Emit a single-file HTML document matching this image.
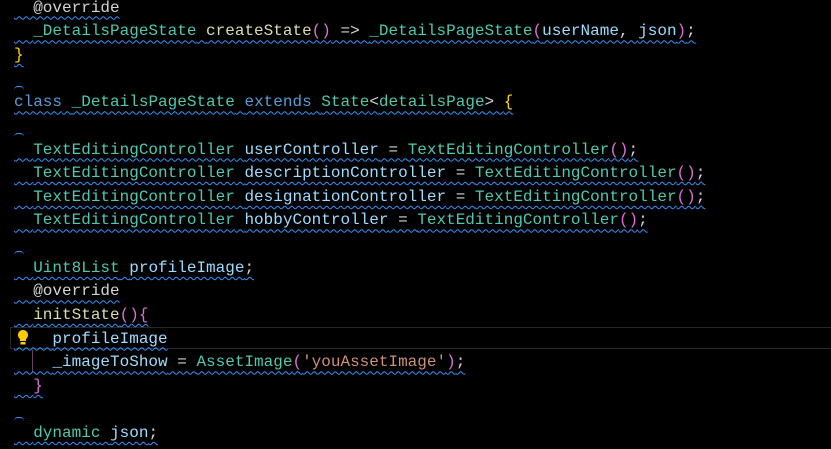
<!DOCTYPE html>
<html><head><meta charset="utf-8"><style>
html,body{margin:0;padding:0;background:#000;width:831px;height:449px;overflow:hidden}
#c{position:absolute;left:14px;top:-3.3px;font-family:"Liberation Mono",monospace;font-size:16px;line-height:23.65px;color:#d4d4d4}
.l{height:23.65px;white-space:pre}
.s{text-decoration:underline wavy #3794ff;text-decoration-thickness:1px;text-underline-offset:4px;text-decoration-skip-ink:none}
.k{color:#569cd6}.t{color:#4ec9b0}.f{color:#dcdcaa}.v{color:#9cdcfe}.st{color:#ce9178}
.g{color:#ffd700}.p{color:#da70d6}
.tl{display:inline-block;width:10px;height:3px;border-top:1px solid #3794ff;border-radius:6px 6px 0 0;vertical-align:top;margin-top:18px}
#hl{position:absolute;left:10px;top:327px;width:821px;height:22px;border:1px solid #282828;border-right:none;box-sizing:border-box}
#bulb{position:absolute;left:17px;top:329px}
#bar{position:absolute;left:32px;top:350px;width:1px;height:22px;background:#6a3f5a}
</style></head><body>
<div id="hl"></div>
<div id="bar"></div>
<svg id="bulb" width="12" height="17" viewBox="0 0 12 17"><path d="M6 1C3 1 1 3.2 1 6c0 2 1.2 3 2 4.2V12h6v-1.8C9.8 9 11 8 11 6c0-2.8-2-5-5-5z" fill="#ffcc00"/><rect x="3.5" y="13" width="5" height="2.5" fill="#ffcc00"/></svg>
<div id="c"><div class="l"><span class="s">  @override</span></div><div class="l"><span class="s">  <span class="t">_DetailsPageState</span> <span class="f">createState</span><span class="p">()</span> =&gt; <span class="t">_DetailsPageState</span><span class="p">(</span><span class="v">userName</span>, <span class="v">json</span><span class="p">)</span>;</span></div><div class="l"><span class="s g">}</span></div><div class="l"><span class="tl"></span></div><div class="l"><span class="s"><span class="k">class</span> <span class="t">_DetailsPageState</span> <span class="k">extends</span> <span class="t">State</span>&lt;<span class="t">detailsPage</span>&gt; <span class="g">{</span></span></div><div class="l"><span class="tl"></span></div><div class="l"><span class="s">  <span class="t">TextEditingController</span> <span class="v">userController</span> = <span class="t">TextEditingController</span><span class="p">()</span>;</span></div><div class="l"><span class="s">  <span class="t">TextEditingController</span> <span class="v">descriptionController</span> = <span class="t">TextEditingController</span><span class="p">()</span>;</span></div><div class="l"><span class="s">  <span class="t">TextEditingController</span> <span class="v">designationController</span> = <span class="t">TextEditingController</span><span class="p">()</span>;</span></div><div class="l"><span class="s">  <span class="t">TextEditingController</span> <span class="v">hobbyController</span> = <span class="t">TextEditingController</span><span class="p">()</span>;</span></div><div class="l"><span class="tl"></span></div><div class="l"><span class="s">  <span class="t">Uint8List</span> <span class="v">profileImage</span>;</span></div><div class="l"><span class="s">  @override</span></div><div class="l"><span class="s">  <span class="f">initState</span><span class="p">(){</span></span></div><div class="l"><span class="s">    <span class="v">profileImage</span></span></div><div class="l"><span class="s">    <span class="v">_imageToShow</span> = <span class="t">AssetImage</span><span class="p">(</span><span class="st">'youAssetImage'</span><span class="p">)</span>;</span></div><div class="l"><span class="s">  <span class="p">}</span></span></div><div class="l"><span class="tl"></span></div><div class="l"><span class="s">  <span class="t">dynamic</span> <span class="v">json</span>;</span></div></div>
</body></html>
